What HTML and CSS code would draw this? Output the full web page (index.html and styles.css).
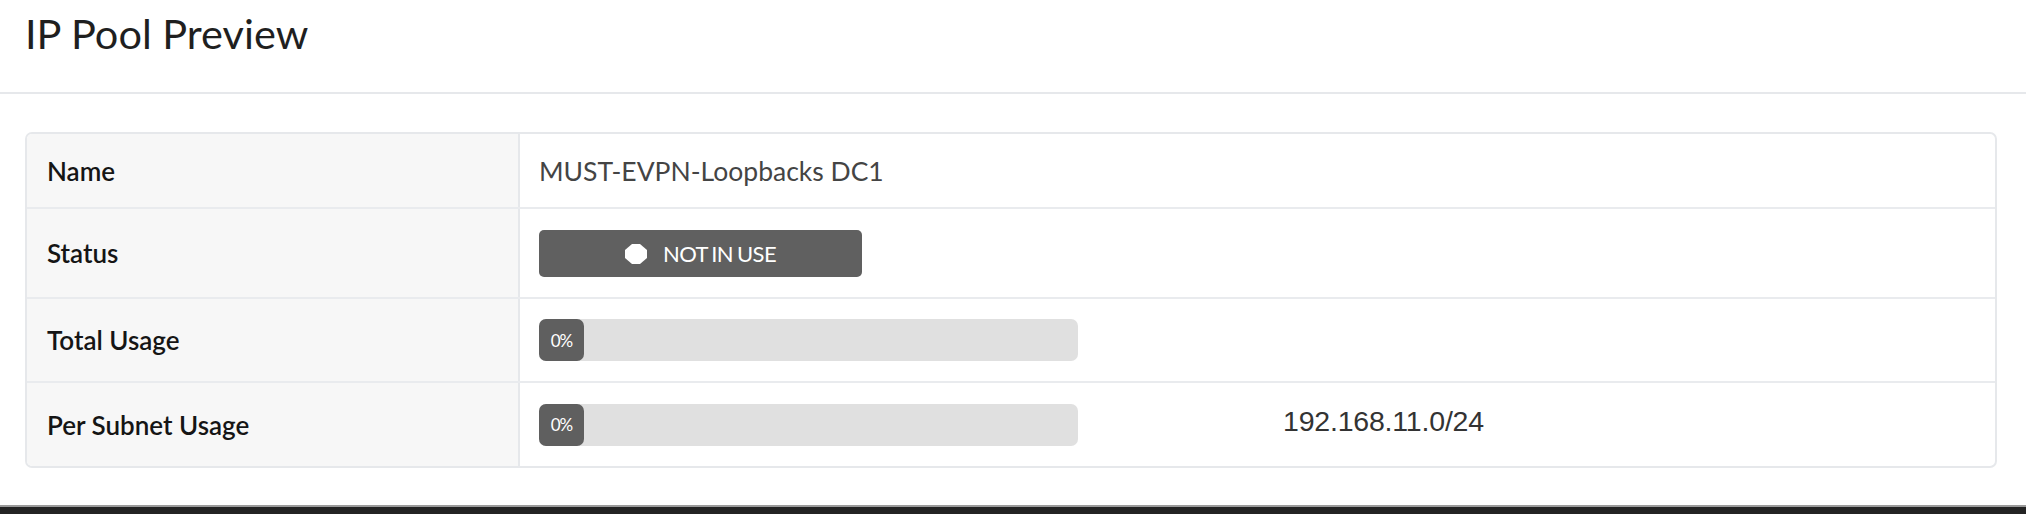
FILE: index.html
```html
<!DOCTYPE html>
<html lang="en">
<head>
<meta charset="utf-8">
<title>IP Pool Preview</title>
<link rel="stylesheet" href="styles.css">
</head>
<body>
<div class="page">
  <header class="header">
    <h1 class="title">IP Pool Preview</h1>
  </header>
  <main class="content">
    <div class="details">
      <div class="row row-name">
        <div class="label">Name</div>
        <div class="value"><span class="text">MUST-EVPN-Loopbacks DC1</span></div>
      </div>
      <div class="row row-status">
        <div class="label">Status</div>
        <div class="value">
          <span class="badge">
            <svg class="badge-icon" width="22" height="20" viewBox="0 0 22 20" aria-hidden="true">
              <polygon points="7,0 15,0 22,6 22,14 15,20 7,20 0,14 0,6" fill="#ffffff"/>
            </svg>
            <span class="badge-text">NOT IN USE</span>
          </span>
        </div>
      </div>
      <div class="row row-usage">
        <div class="label">Total Usage</div>
        <div class="value">
          <div class="bar"><div class="bar-fill">0%</div></div>
        </div>
      </div>
      <div class="row row-usage last">
        <div class="label">Per Subnet Usage</div>
        <div class="value">
          <div class="bar"><div class="bar-fill">0%</div></div>
          <span class="subnet">192.168.11.0/24</span>
        </div>
      </div>
    </div>
  </main>
  <footer class="footer"></footer>
</div>
</body>
</html>
```

FILE: styles.css
```css
* {
  box-sizing: border-box;
}

html, body {
  margin: 0;
  padding: 0;
  background: #ffffff;
}

body {
  font-family: Lato, "Noto Sans", "Liberation Sans", sans-serif;
  color: #222222;
  width: 2026px;
  height: 514px;
  overflow: hidden;
}

.page {
  display: flex;
  flex-direction: column;
  height: 514px;
}

.header {
  height: 94px;
  padding: 8px 0 0 25px;
  border-bottom: 2px solid #e6e8eb;
}

.title {
  margin: 0;
  font-size: 41.5px;
  line-height: 50px;
  font-weight: 400;
  color: #1f1f1f;
}

.content {
  padding: 38px 29px 0 25px;
  flex: 1;
}

.details {
  border: 2px solid #e6e8eb;
  border-radius: 7px;
  overflow: hidden;
  display: flex;
  flex-direction: column;
}

.row {
  display: flex;
  border-bottom: 2px solid #e9ebee;
}

.row.last {
  border-bottom: none;
}

.label {
  width: 493px;
  flex: none;
  background: #f7f7f7;
  border-right: 2px solid #e6e8eb;
  padding-left: 20px;
  display: flex;
  align-items: center;
  font-size: 26px;
  font-weight: 600;
  color: #151515;
}

.value {
  flex: 1;
  display: flex;
  align-items: center;
  padding-left: 19px;
}

.row-name {
  height: 75px;
}

.row-status {
  height: 90px;
}

.row-usage {
  height: 84px;
}

.row-usage.last {
  height: 83px;
}

.text {
  font-size: 26.5px;
  color: #444444;
}

.badge {
  width: 323px;
  height: 47px;
  background: #606060;
  border-radius: 5px;
  display: flex;
  align-items: center;
  justify-content: center;
  gap: 16px;
  margin-top: 1px;
}

.badge-icon {
  display: block;
}

.badge-text {
  color: #ffffff;
  font-size: 22px;
  letter-spacing: -0.6px;
  word-spacing: -1px;
}

.bar {
  width: 539px;
  height: 42px;
  background: #e0e0e0;
  border-radius: 7px;
  display: flex;
  flex: none;
}

.bar-fill {
  width: 45px;
  height: 42px;
  background: #5f5f5f;
  border-radius: 7px;
  color: #ffffff;
  font-size: 17px;
  letter-spacing: -1px;
  display: flex;
  align-items: center;
  justify-content: center;
}

.subnet {
  margin-left: 205px;
  margin-top: -6px;
  font-family: "Liberation Sans", Arial, sans-serif;
  font-size: 28.5px;
  color: #333333;
  letter-spacing: -0.2px;
}

.footer {
  height: 9px;
  background: #242424;
  border-top: 2px solid #9a9a9a;
  flex: none;
}
```
